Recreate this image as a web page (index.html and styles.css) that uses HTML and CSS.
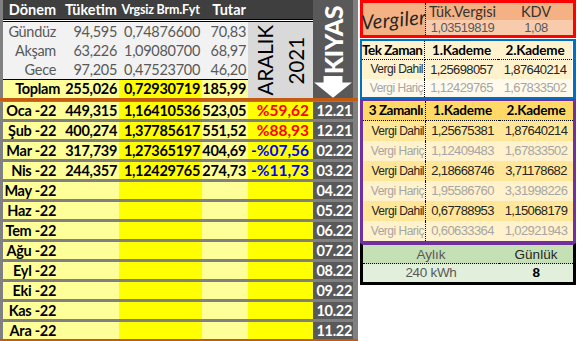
FILE: index.html
```html
<!DOCTYPE html>
<html>
<head>
<meta charset="utf-8">
<link rel="stylesheet" href="styles.css">
</head>
<body>
<div class="sheet">
  <div class="left">
    <div class="top">
      <div class="h hc">Dönem</div>
      <div class="h hr">Tüketim</div>
      <div class="h hc hs">Vrgsiz Brm.Fyt</div>
      <div class="h hr">Tutar</div>
      <div class="h"></div>
      <div class="kiyas">
        <span class="kiyas-t">KIYAS</span>
        <svg class="arrow" width="40" height="23" viewBox="0 0 40 23"><path d="M10 0 H30 V7 H40 L20 23 L0 7 H10 Z" fill="#fff"/></svg>
      </div>
      <div class="dbl"></div>
      <div class="g c1">Gündüz</div><div class="g">94,595</div><div class="g">0,74876600</div><div class="g">70,83</div>
      <div class="aralik"><span class="aralik-t">ARALIK<br>2021</span></div>
      <div class="g c1">Akşam</div><div class="g">63,226</div><div class="g">1,09080700</div><div class="g">68,97</div>
      <div class="g c1">Gece</div><div class="g">97,205</div><div class="g">0,47523700</div><div class="g">46,20</div>
      <div class="blk"></div>
      <div class="t c1 ly">Toplam</div><div class="t ly">255,026</div><div class="t by">0,72930719</div><div class="t ly">185,99</div>
    </div>
    <div class="orange"></div>
    <div class="months">
      <div class="m c1 ly">Oca -22</div><div class="m ly">449,315</div><div class="m by">1,16410536</div><div class="m ly">523,05</div><div class="m by p red">%59,62</div><div class="m k">12.21</div>
      <div class="m c1 ly">Şub -22</div><div class="m ly">400,274</div><div class="m by">1,37785617</div><div class="m ly">551,52</div><div class="m by p red">%88,93</div><div class="m k">12.21</div>
      <div class="m c1 ly">Mar -22</div><div class="m ly">317,739</div><div class="m by">1,27365197</div><div class="m ly">404,69</div><div class="m by p blue">-%07,56</div><div class="m k">02.22</div>
      <div class="m c1 ly">Nis -22</div><div class="m ly">244,357</div><div class="m by">1,12429765</div><div class="m ly">274,73</div><div class="m by p blue">-%11,73</div><div class="m k">03.22</div>
      <div class="m c1 ly">May -22</div><div class="m ly"></div><div class="m by"></div><div class="m ly"></div><div class="m by"></div><div class="m k">04.22</div>
      <div class="m c1 ly">Haz -22</div><div class="m ly"></div><div class="m by"></div><div class="m ly"></div><div class="m by"></div><div class="m k">05.22</div>
      <div class="m c1 ly">Tem -22</div><div class="m ly"></div><div class="m by"></div><div class="m ly"></div><div class="m by"></div><div class="m k">06.22</div>
      <div class="m c1 ly">Ağu -22</div><div class="m ly"></div><div class="m by"></div><div class="m ly"></div><div class="m by"></div><div class="m k">07.22</div>
      <div class="m c1 ly">Eyl -22</div><div class="m ly"></div><div class="m by"></div><div class="m ly"></div><div class="m by"></div><div class="m k">08.22</div>
      <div class="m c1 ly">Eki -22</div><div class="m ly"></div><div class="m by"></div><div class="m ly"></div><div class="m by"></div><div class="m k">09.22</div>
      <div class="m c1 ly">Kas -22</div><div class="m ly"></div><div class="m by"></div><div class="m ly"></div><div class="m by"></div><div class="m k">10.22</div>
      <div class="m c1 ly">Ara -22</div><div class="m ly"></div><div class="m by"></div><div class="m ly"></div><div class="m by"></div><div class="m k">11.22</div>
    </div>
    <div class="orange2"></div>
  </div>

  <div class="right">
    <div class="box red-box">
      <div class="verg"><span>Vergiler</span></div>
      <div class="rh">Tük.Vergisi</div>
      <div class="rh">KDV</div>
      <div class="rv">1,03519819</div>
      <div class="rv">1,08</div>
    </div>
    <div class="box blue-box">
      <div class="lh">Tek Zaman</div><div class="ch">1.Kademe</div><div class="ch">2.Kademe</div>
      <div class="lab d1">Vergi Dahil</div><div class="num d1">1,25698057</div><div class="num d1">1,87640214</div>
      <div class="lab x1">Vergi Hariç</div><div class="num x1">1,12429765</div><div class="num x1">1,67833502</div>
    </div>
    <div class="box purple-box">
      <div class="lh">3 Zamanlı</div><div class="ch">1.Kademe</div><div class="ch">2.Kademe</div>
      <div class="lab d2">Vergi Dahil</div><div class="num d2">1,25675381</div><div class="num d2">1,87640214</div>
      <div class="lab x2">Vergi Hariç</div><div class="num x2">1,12409483</div><div class="num x2">1,67833502</div>
      <div class="lab d2">Vergi Dahil</div><div class="num d2">2,18668746</div><div class="num d2">3,71178682</div>
      <div class="lab x2">Vergi Hariç</div><div class="num x2">1,95586760</div><div class="num x2">3,31998226</div>
      <div class="lab d2">Vergi Dahil</div><div class="num d2">0,67788953</div><div class="num d2">1,15068179</div>
      <div class="lab x2">Vergi Hariç</div><div class="num x2">0,60633364</div><div class="num x2">1,02921943</div>
    </div>
    <div class="box green-box">
      <div class="gh">Aylık</div><div class="gh gd">Günlük</div>
      <div class="gv">240 kWh</div><div class="gv gb">8</div>
    </div>
  </div>
</div>
</body>
</html>
```

FILE: styles.css
```css
* { box-sizing: border-box; }
html, body { margin: 0; padding: 0; background: #fff; }
body { width: 577px; height: 341px; overflow: hidden; }

.sheet {
  display: flex;
  align-items: flex-start;
  font-family: Lato, "Open Sans", sans-serif;
}

/* ---------- left table ---------- */
.left { width: 358px; display: flex; flex-direction: column; }

.top {
  display: grid;
  grid-template-columns: 59px 57px 83px 46px 65px 40px;
  grid-template-rows: 19px 3px 19px 19px 19px 1px 18px;
  background: #808080;
  padding: 0 5px 0 3px;
}
.h {
  background: #3f3f3f;
  color: #fff;
  font-weight: 700;
  font-size: 14.5px;
  line-height: 19px;
  white-space: nowrap;
  overflow: hidden;
}
.hc { text-align: center; }
.hr { text-align: right; padding-right: 2px; }
.hs { font-size: 12.5px; letter-spacing: -0.2px; }

.kiyas {
  grid-column: 6;
  grid-row: 1 / 8;
  background: #595959;
  display: flex;
  flex-direction: column;
  align-items: center;
  padding-top: 6px;
}
.kiyas-t {
  writing-mode: vertical-rl;
  transform: rotate(180deg);
  color: #fff;
  font-weight: 900;
  font-size: 25px;
  line-height: 20px;
  letter-spacing: -0.5px;
}
.arrow { margin-top: 2px; display: block; }

.dbl {
  grid-column: 1 / 6;
  grid-row: 2;
  background: #fff;
  border-top: 1px solid #000;
  border-bottom: 1px solid #000;
}
.g {
  background: #f2f2f2;
  color: #595959;
  font-size: 14.5px;
  line-height: 19px;
  text-align: right;
  padding-right: 2px;
  white-space: nowrap;
  letter-spacing: -0.3px;
}
.c1 { padding-right: 6px; }
.aralik {
  grid-column: 5;
  grid-row: 3 / 8;
  background: #d9d9d9;
  display: flex;
  align-items: center;
  justify-content: center;
}
.aralik-t {
  writing-mode: vertical-rl;
  transform: rotate(180deg);
  text-align: center;
  font-size: 20.5px;
  line-height: 31px;
  color: #000;
}
.blk { grid-column: 1 / 5; grid-row: 6; background: #000; }
.t {
  font-weight: 700;
  font-size: 14.5px;
  line-height: 18px;
  text-align: right;
  padding-right: 2px;
  white-space: nowrap;
  letter-spacing: -0.3px;
  color: #000;
}
.ly { background: #ffff99; }
.by { background: #ffff00; }

.orange { height: 3px; background: #c55a11; }
.orange2 { height: 2px; background: #c55a11; }

.months {
  display: grid;
  grid-template-columns: 59px 57px 83px 46px 65px 40px;
  grid-auto-rows: 17px;
  row-gap: 3px;
  background: #808080;
  padding: 1px 5px 0 3px;
}
.m {
  font-weight: 700;
  font-size: 14.5px;
  line-height: 17px;
  text-align: right;
  padding-right: 2px;
  white-space: nowrap;
  letter-spacing: -0.3px;
  color: #000;
}
.m.c1 { padding-right: 6px; }
.p { padding-right: 4px; font-size: 15.5px; letter-spacing: 0; }
.red { color: #ff0000; }
.blue { color: #0000ff; }
.k { background: #595959; color: #fff; padding-right: 1px; }

/* ---------- right panel ---------- */
.right { width: 216px; margin-left: 2px; display: flex; flex-direction: column; }
.box {
  display: grid;
  grid-template-columns: 63px 73px 74px;
}
.red-box {
  border: 3px solid #ff0000;
  grid-template-rows: 17px 15px;
}
.verg {
  grid-row: 1 / 3;
  background: #f4b183;
  border-right: 1px dotted #000;
  display: flex;
  align-items: center;
  justify-content: center;
}
.verg span {
  font-style: italic;
  font-size: 20px;
  color: #262626;
  transform: rotate(-5deg);
  display: inline-block;
  letter-spacing: 0.3px;
}
.rh {
  background: #f4b183;
  color: #333;
  font-size: 14.5px;
  line-height: 17px;
  text-align: center;
}
.rv {
  background: #f8cbad;
  color: #595959;
  font-family: "Liberation Sans", Arial, sans-serif;
  font-size: 13px;
  letter-spacing: -0.5px;
  line-height: 15px;
  text-align: center;
}

.blue-box {
  margin-top: 1px;
  border: 2px solid #0070c0;
  border-width: 2px 3px 2px 2px;
  grid-template-rows: 19px 19px 18px;
}
.purple-box {
  border: 3px solid #7030a0;
  border-width: 2px 3px 2px 3px;
  grid-auto-rows: 20px;
}
.lh, .ch {
  font-weight: 700;
  font-size: 13.5px;
  color: #000;
  border-bottom: 1px dotted #000;
  white-space: nowrap;
}
.lh { text-align: right; padding-right: 2px; border-right: 1px dotted #000; letter-spacing: -0.5px; }
.ch { text-align: center; letter-spacing: -0.2px; }
.blue-box .lh, .blue-box .ch { background: #fff2cc; line-height: 18px; }
.purple-box .lh, .purple-box .ch { background: #ffd966; line-height: 19px; }

.lab {
  font-family: "Liberation Sans", Arial, sans-serif;
  font-size: 12px;
  letter-spacing: -0.5px;
  text-align: right;
  padding-right: 1px;
  border-right: 1px dotted #000;
  white-space: nowrap;
}
.num {
  font-family: "Liberation Sans", Arial, sans-serif;
  font-size: 13px;
  letter-spacing: -0.6px;
  text-align: center;
  white-space: nowrap;
}
.d1 { background: #fff2cc; color: #262626; line-height: 19px; }
.x1 { background: #fffaeb; color: #a6a6a6; line-height: 18px; }
.d2 { background: #ffe699; color: #262626; line-height: 20px; }
.x2 { background: #fff2cc; color: #a6a6a6; line-height: 20px; }

.green-box {
  border: 3px solid #000;
  border-top: 2px solid #7030a0;
  grid-template-columns: 136px 74px;
  grid-template-rows: 19px 18px;
}
.gh {
  background: #c5e0b4;
  border-bottom: 1px dotted #000;
  font-family: "Liberation Sans", Arial, sans-serif;
  font-size: 13.5px;
  line-height: 19px;
  color: #595959;
  text-align: center;
}
.gd { color: #262626; }
.gv {
  background: #e2efda;
  font-family: "Liberation Sans", Arial, sans-serif;
  font-size: 13.5px;
  letter-spacing: -0.3px;
  line-height: 17px;
  color: #595959;
  text-align: center;
}
.gb { font-weight: 700; color: #000; }
```
